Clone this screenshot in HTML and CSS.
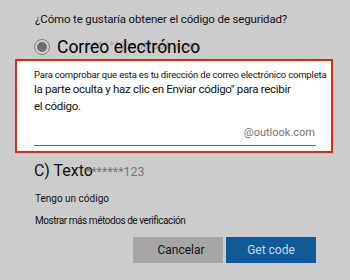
FILE: index.html
```html
<!DOCTYPE html>
<html lang="es">
<head>
<meta charset="utf-8">
<link rel="stylesheet" href="styles.css">
</head>
<body>
<div class="page">
  <p class="question">¿Cómo te gustaría obtener el código de seguridad?</p>
  <div class="option">
    <span class="ghost">h*****@outlook.com</span>
    <span class="radio"><span class="dot"></span></span>
    <span class="option-label">Correo electrónico</span>
  </div>
  <div class="panel">
    <p class="hint-small">Para comprobar que esta es tu dirección de correo electrónico completa</p>
    <p class="hint">la parte oculta y haz clic en Enviar código" para recibir<br>el código.</p>
    <div class="field"><span class="suffix">@outlook.com</span></div>
  </div>
  <div class="text-option"><span class="text-label">C) Texto</span><span class="masked">*******123</span></div>
  <p class="link first">Tengo un código</p>
  <p class="link condensed">Mostrar más métodos de verificación</p>
  <div class="actions">
    <button class="btn btn-cancel">Cancelar</button>
    <button class="btn btn-primary">Get code</button>
  </div>
</div>
</body>
</html>
```
FILE: styles.css
```css
html, body {
  margin: 0;
  padding: 0;
}
body {
  background: #cccccc;
  font-family: Roboto, "Liberation Sans", Arial, sans-serif;
  color: #111;
  width: 350px;
  height: 280px;
  overflow: hidden;
}
.page {
  padding: 11px 0 0 0;
}
p { margin: 0; }
.question {
  font-size: 11.5px;
  letter-spacing: -0.15px;
  padding-left: 35px;
  height: 16px;
  line-height: 16px;
  white-space: nowrap;
}
.option {
  position: relative;
  display: flex;
  align-items: center;
  padding-left: 34px;
  margin-top: 10px;
  height: 20px;
}
.radio {
  width: 14px;
  height: 14px;
  border: 1.5px solid #7a7a7a;
  border-radius: 50%;
  display: flex;
  align-items: center;
  justify-content: center;
  background: #d4d4d4;
}
.dot {
  width: 10px;
  height: 10px;
  border-radius: 50%;
  background: #6e6e6e;
}
.option-label {
  position: relative;
  font-size: 17.5px;
  margin-left: 7px;
  line-height: 20px;
  color: #000;
  white-space: nowrap;
}
.ghost {
  position: absolute;
  left: 86px;
  top: 3px;
  font-size: 10px;
  letter-spacing: 1.2px;
  color: #9a9a9a;
  white-space: nowrap;
}
.panel {
  margin: 2px 17px 0 15px;
  border: 2px solid #e8270f;
  background: #fff;
  padding: 7px 15px 0 17px;
  height: 83px;
}
.hint-small {
  font-size: 9.5px;
  letter-spacing: -0.17px;
  line-height: 13px;
  white-space: nowrap;
}
.hint {
  font-size: 11.5px;
  letter-spacing: -0.3px;
  line-height: 17px;
  white-space: nowrap;
}
.field {
  margin-top: 9px;
  border-bottom: 1.5px solid #666;
  text-align: right;
  padding-bottom: 5px;
  padding-right: 1px;
  line-height: 14px;
}
.suffix {
  font-size: 11px;
  color: #777;
}
.text-option {
  padding-left: 34px;
  margin-top: 8px;
  height: 20px;
  display: flex;
  align-items: baseline;
  white-space: nowrap;
}
.text-label {
  font-size: 16px;
  color: #111;
}
.masked {
  font-size: 12.5px;
  color: #777;
  margin-left: -7px;
}
.link {
  font-size: 10px;
  padding-left: 35px;
  line-height: 14px;
  white-space: nowrap;
}
.link.condensed { letter-spacing: -0.45px; }
.link.first { margin-top: 11px; }
.link + .link { margin-top: 8px; }
.actions {
  display: flex;
  justify-content: flex-end;
  gap: 3px;
  padding-right: 34px;
  margin-top: 9px;
}
.btn {
  width: 90px;
  height: 26px;
  border: none;
  font-family: inherit;
  font-size: 12px;
  padding: 0;
}
.btn-cancel {
  background: #a6a6a6;
  color: #111;
  padding-left: 6px;
}
.btn-primary {
  background: #0f5a98;
  color: #c9d8e8;
}
```
